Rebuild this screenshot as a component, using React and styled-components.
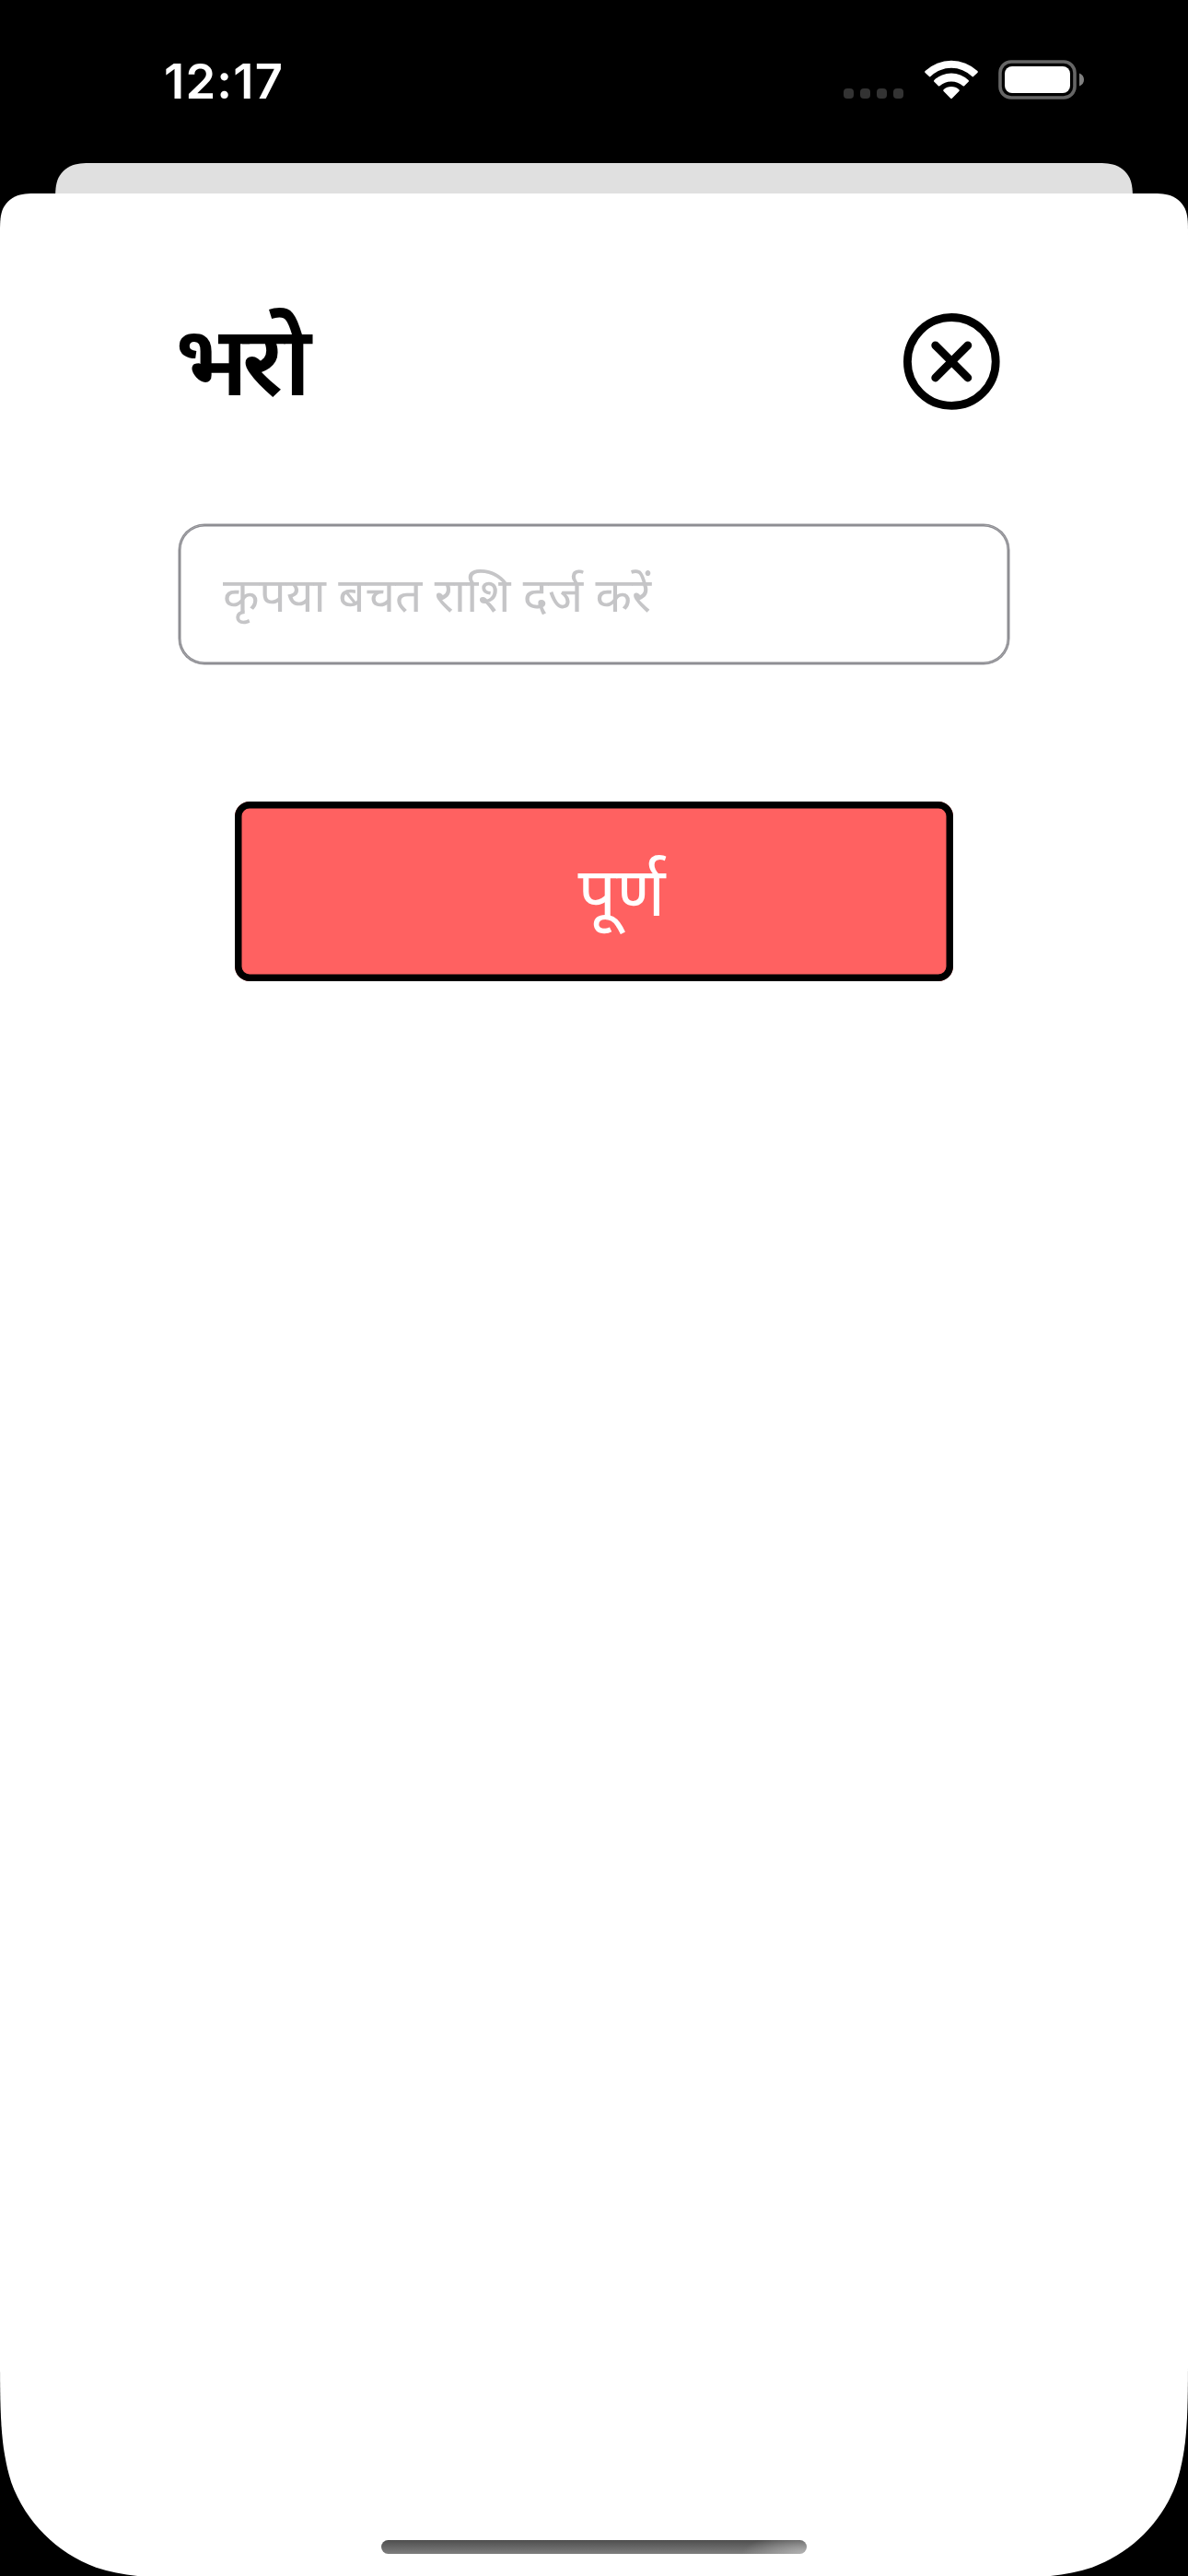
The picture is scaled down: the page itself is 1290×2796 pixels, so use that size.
import React from "react";
import styled, { createGlobalStyle } from "styled-components";

const GlobalStyle = createGlobalStyle`
  *, *::before, *::after { box-sizing: border-box; }
  html, body { margin: 0; padding: 0; background: #000; }
`;

const devanagari = `"Noto Sans", "Noto Sans Devanagari", sans-serif`;

const WIDTH = 1290;
const HEIGHT = 2796;

// Rounded rectangle with continuous-curvature corners.
const smoothRect = (w, h, top, bottom) => {
  const a = 1.528665, b = 1.088493, c = 0.868407, d = 0.631494;
  const e = 0.074911, f = 0.372824, g = 0.16906;
  const t = top, r = bottom;
  return [
    `M${a * t} 0 H${w - a * t}`,
    `C${w - b * t} 0 ${w - c * t} 0 ${w - d * t} ${e * t}`,
    `C${w - f * t} ${g * t} ${w - g * t} ${f * t} ${w - e * t} ${d * t}`,
    `C${w} ${c * t} ${w} ${b * t} ${w} ${a * t}`,
    `V${h - a * r}`,
    `C${w} ${h - b * r} ${w} ${h - c * r} ${w - e * r} ${h - d * r}`,
    `C${w - g * r} ${h - f * r} ${w - f * r} ${h - g * r} ${w - d * r} ${h - e * r}`,
    `C${w - c * r} ${h} ${w - b * r} ${h} ${w - a * r} ${h}`,
    `H${a * r}`,
    `C${b * r} ${h} ${c * r} ${h} ${d * r} ${h - e * r}`,
    `C${f * r} ${h - g * r} ${g * r} ${h - f * r} ${e * r} ${h - d * r}`,
    `C0 ${h - c * r} 0 ${h - b * r} 0 ${h - a * r}`,
    `V${a * t}`,
    `C0 ${b * t} 0 ${c * t} ${e * t} ${d * t}`,
    `C${g * t} ${f * t} ${f * t} ${g * t} ${d * t} ${e * t}`,
    `C${c * t} 0 ${b * t} 0 ${a * t} 0 Z`,
  ].join(" ");
};

const Screen = styled.div`
  width: ${WIDTH}px;
  height: ${HEIGHT}px;
  overflow: hidden;
  display: flex;
  flex-direction: column;
  background: #000;
`;

const StatusBar = styled.header`
  height: 177px;
  flex: none;
  display: flex;
  justify-content: space-between;
  padding: 57px 113px 0 178px;
`;

const Time = styled.time`
  font: 600 52.5px/62px Inter, sans-serif;
  letter-spacing: 1.2px;
  color: #fff;
`;

const StatusIcons = styled.div`
  display: flex;
  align-items: flex-end;
  height: 51px;
`;

const SignalDots = styled.div`
  display: flex;
  gap: 7px;
  margin: 0 23px 1px 0;
`;

const Dot = styled.span`
  width: 11px;
  height: 11px;
  border-radius: 4px;
  background: #333;
`;

const Wifi = styled.svg`
  width: 58px;
  height: 43px;
  margin-right: 22px;
`;

const Battery = styled.svg`
  width: 93px;
  height: 43px;
`;

const BackCard = styled.div`
  flex: none;
  height: 33px;
  margin: 0 60px;
  background: #e0e0e0;
  clip-path: path("${smoothRect(WIDTH - 120, 200, 30, 30)}");
`;

const Sheet = styled.main`
  flex: 1;
  display: flex;
  flex-direction: column;
  align-items: center;
  background: #fff;
  clip-path: path("${smoothRect(WIDTH, HEIGHT - 210 + 3, 30, 165)}");
`;

const SheetHeader = styled.div`
  width: 900px;
  height: 360px;
  flex: none;
  display: flex;
  justify-content: space-between;
  align-items: flex-start;
  padding: 130px 9px 0 0;
`;

const Title = styled.h1`
  margin: -12px 0 0 -5px;
  font: 600 106px/120px ${devanagari};
  letter-spacing: -7px;
  color: #000;
`;

const CloseButton = styled.button`
  display: flex;
  margin: 0;
  padding: 0;
  border: 0;
  background: none;
`;

const CloseIcon = styled.svg`
  width: 106px;
  height: 106px;
`;

const AmountInput = styled.input`
  width: 900px;
  height: 150px;
  flex: none;
  padding: 0 45px 3px 47px;
  border: 0;
  outline: 0;
  border-radius: 27px;
  background: #fff;
  box-shadow: 0 0 0 1.5px #8e8e93, inset 0 0 0 1.5px #8e8e93;
  font: 400 51.4px/72px ${devanagari};
  color: #000;
  &::placeholder {
    color: #c5c5c7;
    opacity: 1;
  }
`;

const SubmitButton = styled.button`
  width: 780px;
  height: 195px;
  flex: none;
  display: flex;
  align-items: center;
  justify-content: center;
  margin: 150px 0 0;
  padding: 0 0 3px 60px;
  border: 0;
  border-radius: 16px;
  background: #ff6161;
  box-shadow: inset 0 0 0 7.5px #000;
  font: 400 73.5px/100px ${devanagari};
  color: #fff;
`;

const HomeIndicator = styled.div`
  width: 462px;
  height: 15px;
  flex: none;
  margin: auto 0 24px;
  border-radius: 8px;
  background:
    radial-gradient(70px 22px at 100% 100%, rgba(190, 190, 190, 0.85), rgba(190, 190, 190, 0)),
    linear-gradient(#4e4e4e, #7e7e7e);
`;

export default function App() {
  return (
    <Screen>
      <GlobalStyle />
      <StatusBar>
        <Time>12:17</Time>
        <StatusIcons>
          <SignalDots>
            {[0, 1, 2, 3].map((i) => (
              <Dot key={i} />
            ))}
          </SignalDots>
          <Wifi viewBox="0 0 58 43" fill="#fff">
            <path d="M.6 12.1Q-.3 13 .6 13.9L5 18.1Q5.7 18.7 6.4 18A32.5 32.5 0 0 1 51.6 18Q52.3 18.7 53 18.1L57.4 13.9Q58.3 13 57.4 12.1A41.5 41.5 0 0 0 .6 12.1Z" />
            <path d="M10.4 22Q9.6 22.9 10.4 23.7L14.9 28.2Q15.6 28.9 16.4 28.2A19 19 0 0 1 41.6 28.2Q42.4 28.9 43.1 28.2L47.6 23.7Q48.4 22.9 47.6 22A27 27 0 0 0 10.4 22Z" />
            <path d="M20.6 32.2Q19.7 33.2 20.6 34L28.2 41.7Q29 42.5 29.8 41.7L37.4 34Q38.3 33.2 37.4 32.2A12.5 12.5 0 0 0 20.6 32.2Z" />
          </Wifi>
          <Battery viewBox="0 0 93 43">
            <rect x="2" y="2" width="81" height="39" rx="12" fill="none" stroke="#666" strokeWidth="3.6" />
            <rect x="7" y="7" width="71" height="29" rx="8" fill="#fff" />
            <path d="M88 14.5C91.3 15.9 93 18.4 93 21.5C93 24.6 91.3 27.1 88 28.5Z" fill="#808080" />
          </Battery>
        </StatusIcons>
      </StatusBar>
      <BackCard />
      <Sheet>
        <SheetHeader>
          <Title>भरो</Title>
          <CloseButton aria-label="Close">
            <CloseIcon viewBox="0 0 106 106" fill="none" stroke="#000" strokeWidth="8.8">
              <circle cx="53.3" cy="52.4" r="47.9" />
              <path d="M35.7 34.8L70.9 70M70.9 34.8L35.7 70" strokeLinecap="round" />
            </CloseIcon>
          </CloseButton>
        </SheetHeader>
        <AmountInput placeholder="कृपया बचत राशि दर्ज करें" />
        <SubmitButton>पूर्ण</SubmitButton>
        <HomeIndicator />
      </Sheet>
    </Screen>
  );
}
